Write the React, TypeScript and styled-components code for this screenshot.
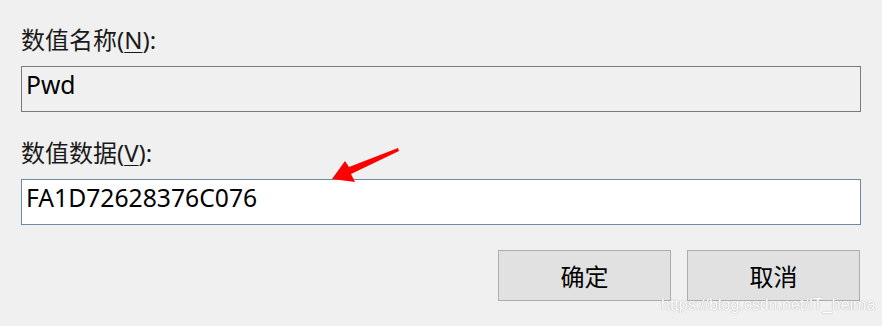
import React from 'react'
import styled, { createGlobalStyle } from 'styled-components'

const GlobalStyle = createGlobalStyle`
  html, body {
    margin: 0;
    padding: 0;
    background: #f0f0f0;
  }
`

function App() {
  return (
    <Dialog>
      <GlobalStyle />
      <Label>
        数值名称(<u>N</u>):
      </Label>
      <Field $readOnly>Pwd</Field>
      <Label $gap>
        数值数据(<u>V</u>):
      </Label>
      <Field>FA1D72628376C076</Field>
      <ButtonRow>
        <Button>确定</Button>
        <Button>取消</Button>
      </ButtonRow>
      <Arrow width='70' height='36' viewBox='0 0 70 36'>
        <path d='M68 3 L67 0 L18 19 L14 13 L1 31 L24 34 L20 26 Z' fill='#ff0000' />
      </Arrow>
      <Watermark>https://blog.csdn.net/IT_heima</Watermark>
    </Dialog>
  )
}

export default App

const Dialog = styled.div`
  position: relative;
  box-sizing: border-box;
  width: 882px;
  height: 326px;
  padding: 24px 21px 0 21px;
  display: flex;
  flex-direction: column;
  background: #f0f0f0;
  overflow: hidden;
`

const Label = styled.div<{ $gap?: boolean }>`
  font-family: 'Noto Sans', 'Noto Sans CJK SC', sans-serif;
  font-size: 24px;
  line-height: 32px;
  color: #1a1a1a;
  margin-top: ${p => (p.$gap ? '25px' : '0')};
  margin-bottom: 10px;

  u {
    text-decoration-thickness: 1px;
    text-underline-offset: 3px;
  }
`

const Field = styled.div<{ $readOnly?: boolean }>`
  box-sizing: border-box;
  height: 46px;
  padding: 2px 4px 0 4px;
  border: 1px solid ${p => (p.$readOnly ? '#7a7a7a' : '#6f8aa3')};
  background: ${p => (p.$readOnly ? '#f0f0f0' : '#ffffff')};
  font-family: 'Noto Sans', 'Noto Sans CJK SC', sans-serif;
  font-size: 24.7px;
  line-height: 32px;
  color: #000;
`

const ButtonRow = styled.div`
  display: flex;
  justify-content: flex-end;
  gap: 16px;
  margin-top: 25px;
  margin-right: 1px;
`

const Button = styled.button`
  box-sizing: border-box;
  width: 173px;
  height: 51px;
  padding: 0;
  border: 1px solid #adadad;
  background: #e1e1e1;
  font-family: 'Noto Sans CJK SC', sans-serif;
  font-size: 24px;
  color: #000;
`

const Arrow = styled.svg`
  position: absolute;
  left: 331px;
  top: 148px;
`

const Watermark = styled.div`
  position: absolute;
  left: 661px;
  top: 295px;
  font-family: 'Liberation Sans', Arial, sans-serif;
  font-size: 16px;
  line-height: 20px;
  color: #ffffff;
  text-shadow: 0 0 1px #b4b4b4, 0 0 1px #b4b4b4;
`
